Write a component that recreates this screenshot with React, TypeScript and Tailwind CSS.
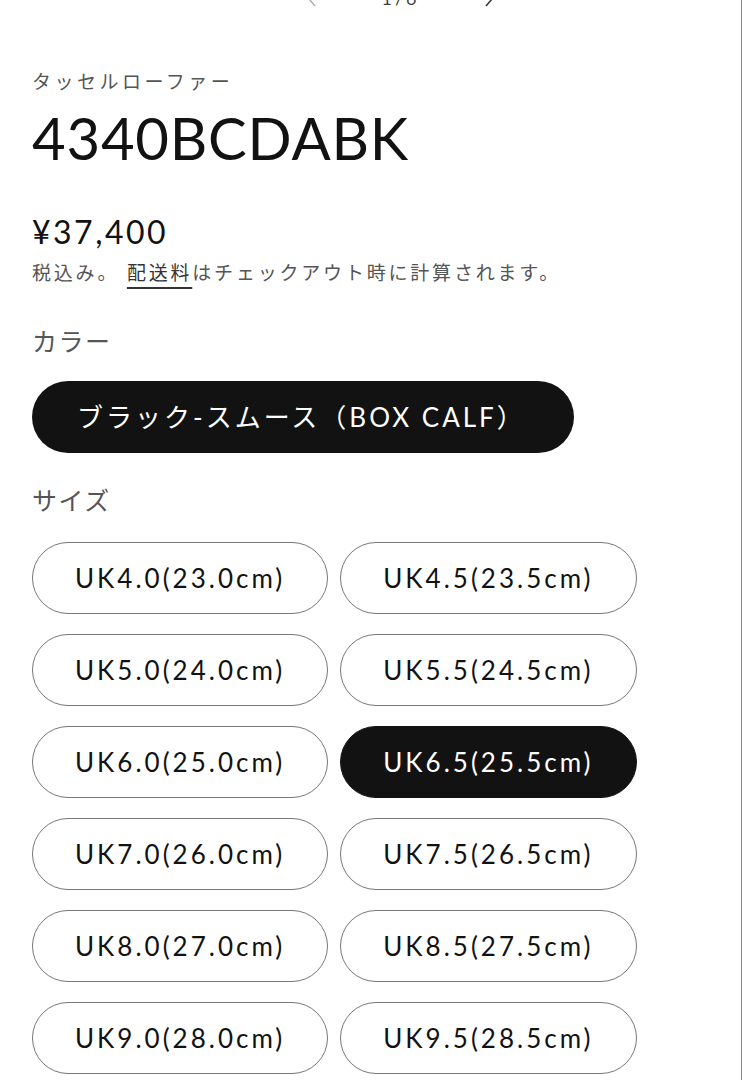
import React, { useState } from 'react';

const FONT = '"Lato", "Noto Sans CJK JP", sans-serif';

const SIZES = [
  'UK4.0(23.0cm)',
  'UK4.5(23.5cm)',
  'UK5.0(24.0cm)',
  'UK5.5(24.5cm)',
  'UK6.0(25.0cm)',
  'UK6.5(25.5cm)',
  'UK7.0(26.0cm)',
  'UK7.5(26.5cm)',
  'UK8.0(27.0cm)',
  'UK8.5(27.5cm)',
  'UK9.0(28.0cm)',
  'UK9.5(28.5cm)',
];

const Chevron = ({ dir, className }: { dir: 'left' | 'right'; className?: string }) => (
  <svg width="10" height="16" viewBox="0 0 10 16" className={className} fill="none" stroke="currentColor" strokeWidth="1.5">
    {dir === 'left' ? <path d="M8 1 L2 8 L8 15" /> : <path d="M2 1 L8 8 L2 15" />}
  </svg>
);

const App: React.FC = () => {
  const [size, setSize] = useState('UK6.5(25.5cm)');

  return (
    <div
      className="min-h-screen bg-white text-[#121212] border-r border-[#8a8a8a] overflow-hidden"
      style={{ fontFamily: FONT }}
    >
      {/* slider pager, mostly scrolled out of view */}
      <div className="h-[6px] pl-[60px] flex items-end justify-center gap-[64px] leading-none">
        <Chevron dir="left" className="text-[#b0b0b0] -mb-[1px]" />
        <span className="text-[18px] tracking-[3px] text-[#444] -mb-[1px]">1/6</span>
        <Chevron dir="right" className="text-[#333] -mb-[1px]" />
      </div>

      <div className="px-8">
        <p className="mt-[64px] text-[19px] leading-[24px] tracking-[3.5px] text-[#555]">タッセルローファー</p>
        <h1 className="mt-[14px] text-[58px] leading-[60px] tracking-[0.8px] font-normal">4340BCDABK</h1>

        <p className="mt-[46px] text-[32px] leading-[36px] tracking-[2.5px]">¥37,400</p>
        <p className="mt-[10px] text-[19px] leading-[26px] tracking-[2.8px] text-[#555]">
          税込み。{' '}
          <a className="underline underline-offset-[7px] decoration-[1.5px] text-[#333]">配送料</a>
          はチェックアウト時に計算されます。
        </p>

        <div className="mt-[40px]">
          <p className="text-[25px] leading-[30px] tracking-[1.5px] text-[#555]">カラー</p>
          <div className="mt-[25px]">
            <button className="h-[72px] rounded-full bg-[#121212] text-white pl-[45px] pr-[48px] text-[26px] tracking-[3px]">
              ブラック-スムース（BOX CALF）
            </button>
          </div>
        </div>

        <div className="mt-[32px]">
          <p className="text-[25px] leading-[30px] tracking-[1.5px] text-[#555]">サイズ</p>
          <div className="mt-[27px] flex flex-wrap gap-x-3 gap-y-5 max-w-[640px]">
            {SIZES.map(s => (
              <button
                key={s}
                onClick={() => setSize(s)}
                className={`h-[72px] rounded-full px-[42px] text-[26px] tracking-[3px] border-[1.5px] ${
                  size === s ? 'bg-[#121212] border-[#121212] text-white' : 'bg-white border-[#777] text-[#121212]'
                }`}
              >
                {s}
              </button>
            ))}
          </div>
        </div>
      </div>
    </div>
  );
};

export default App;
